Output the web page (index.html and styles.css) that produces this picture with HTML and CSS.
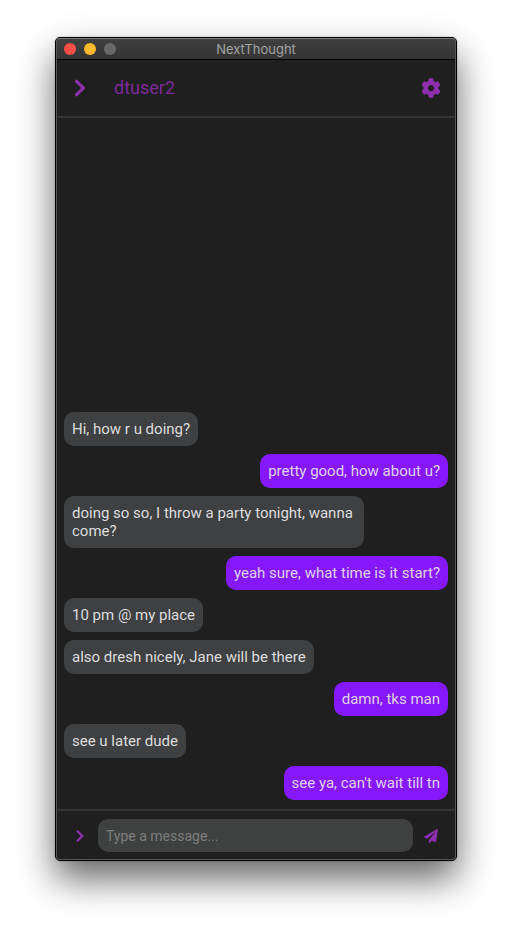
FILE: index.html
```html
<!DOCTYPE html>
<html lang="en">
<head>
<meta charset="utf-8">
<title>NextThought</title>
<link rel="stylesheet" href="styles.css">
</head>
<body>
<div class="window">
  <div class="titlebar">
    <div class="lights">
      <button class="light close" aria-label="Close"></button>
      <button class="light minimize" aria-label="Minimize"></button>
      <button class="light zoom" aria-label="Zoom" disabled></button>
    </div>
    <span class="title">NextThought</span>
  </div>
  <header class="header">
    <button class="icon-button" aria-label="Open conversations"><svg class="icon-large" viewBox="0 0 320 512"><path d="M285.476 272.971L91.132 467.314c-9.373 9.373-24.569 9.373-33.941 0l-22.667-22.667c-9.357-9.357-9.375-24.522-.04-33.901L188.505 256 34.484 101.255c-9.335-9.379-9.317-24.544.04-33.901l22.667-22.667c9.373-9.373 24.569-9.373 33.941 0L285.475 239.03c9.373 9.372 9.373 24.568.001 33.941z"/></svg></button>
    <h1 class="name">dtuser2</h1>
    <button class="icon-button" aria-label="Settings"><svg class="icon-large" viewBox="0 0 512 512"><path d="M487.4 315.7l-42.6-24.6c4.3-23.2 4.3-47 0-70.2l42.6-24.6c4.9-2.8 7.1-8.6 5.5-14-11.1-35.6-30-67.8-54.7-94.6-3.8-4.1-10-5.1-14.8-2.3L380.8 110c-17.9-15.4-38.5-27.3-60.8-35.1V25.8c0-5.6-3.9-10.5-9.4-11.7-36.7-8.2-74.3-7.8-109.2 0-5.5 1.2-9.4 6.1-9.4 11.7V75c-22.2 7.9-42.8 19.8-60.8 35.1L88.7 85.5c-4.9-2.8-11-1.9-14.8 2.3-24.7 26.7-43.6 58.9-54.7 94.6-1.7 5.4.6 11.2 5.5 14L67.3 221c-4.3 23.2-4.3 47 0 70.2l-42.6 24.6c-4.9 2.8-7.1 8.6-5.5 14 11.1 35.6 30 67.8 54.7 94.6 3.8 4.1 10 5.1 14.8 2.3l42.6-24.6c17.9 15.4 38.5 27.3 60.8 35.1v49.2c0 5.6 3.9 10.5 9.4 11.7 36.7 8.2 74.3 7.8 109.2 0 5.5-1.2 9.4-6.1 9.4-11.7v-49.2c22.2-7.9 42.8-19.8 60.8-35.1l42.6 24.6c4.9 2.8 11 1.9 14.8-2.3 24.7-26.7 43.6-58.9 54.7-94.6 1.5-5.5-.7-11.3-5.6-14.1zM256 336c-44.1 0-80-35.9-80-80s35.9-80 80-80 80 35.9 80 80-35.9 80-80 80z"/></svg></button>
  </header>
  <main class="messages">
    <p class="message">Hi, how r u doing?</p>
    <p class="message sent">pretty good, how about u?</p>
    <p class="message">doing so so, I throw a party tonight, wanna come?</p>
    <p class="message sent">yeah sure, what time is it start?</p>
    <p class="message">10 pm @ my place</p>
    <p class="message">also dresh nicely, Jane will be there</p>
    <p class="message sent">damn, tks man</p>
    <p class="message">see u later dude</p>
    <p class="message sent">see ya, can't wait till tn</p>
  </main>
  <form class="composer">
    <button type="button" class="icon-button" aria-label="More options"><svg class="icon-small" viewBox="0 0 320 512"><path d="M285.476 272.971L91.132 467.314c-9.373 9.373-24.569 9.373-33.941 0l-22.667-22.667c-9.357-9.357-9.375-24.522-.04-33.901L188.505 256 34.484 101.255c-9.335-9.379-9.317-24.544.04-33.901l22.667-22.667c9.373-9.373 24.569-9.373 33.941 0L285.475 239.03c9.373 9.372 9.373 24.568.001 33.941z"/></svg></button>
    <input class="field" type="text" placeholder="Type a message..." aria-label="Message">
    <button type="button" class="icon-button" aria-label="Send"><svg class="icon-small" viewBox="0 0 512 512"><path d="M476 3.2L12.5 270.6c-18.1 10.4-15.8 35.6 2.2 43.2L121 358.4l287.3-253.2c5.5-4.9 13.3 2.6 8.6 8.3L176 407v80.5c0 23.6 28.5 32.9 42.5 15.8L282 426l124.6 52.2c14.2 6 30.4-2.9 33-18.2l72-432C515 7.8 493.3-6.8 476 3.2z"/></svg></button>
  </form>
</div>
</body>
</html>
```
FILE: styles.css
```css
* {
  box-sizing: border-box;
}

body {
  display: flex;
  min-height: 100vh;
  margin: 0;
  padding: 37px 55px 73px;
  background: #fff;
  font-family: Roboto, "Liberation Sans", sans-serif;
}

button {
  flex: none;
  padding: 0;
  border: 0;
  background: none;
}

.window {
  position: relative;
  display: flex;
  flex: 1;
  flex-direction: column;
  min-width: 0;
  border: 1px solid #000;
  border-radius: 5px;
  background: #1f1f1f;
  box-shadow: 0 18px 36px rgba(0, 0, 0, 0.6), 0 0 2px rgba(0, 0, 0, 0.3);
}

/* Light rim just inside the black outline */
.window::after {
  position: absolute;
  inset: 0;
  border: 1px solid #555657;
  border-top-color: #77787a;
  border-radius: 4px;
  content: "";
  pointer-events: none;
}

.titlebar {
  display: grid;
  grid-template-columns: 1fr auto 1fr;
  align-items: center;
  height: 22px;
  padding: 0 8px;
  border-bottom: 1px solid #000;
  border-radius: 4px 4px 0 0;
  background: linear-gradient(#404040, #343434);
}

.lights {
  display: flex;
  gap: 8px;
}

.light {
  width: 12px;
  height: 12px;
  border-radius: 50%;
}

.close {
  background: #ff4f48;
}

.minimize {
  background: #ffb92c;
}

.zoom {
  background: #686868;
}

.title {
  color: #a3a3a3;
  font-family: Inter, Roboto, sans-serif;
  font-size: 13px;
  line-height: 20px;
}

.header {
  display: flex;
  align-items: center;
  height: 58px;
  padding: 0 13px 0 12px;
  border-bottom: 2px solid #333435;
}

.icon-button {
  display: flex;
  align-items: center;
  justify-content: center;
  width: 24px;
  height: 24px;
  color: #8e2fae;
}

.icon-button svg {
  fill: currentColor;
}

.icon-large {
  width: 20px;
  height: 20px;
}

.icon-small {
  width: 14px;
  height: 14px;
}

.name {
  flex: 1;
  margin: 0 0 0 22px;
  color: #7f2a9b;
  font-size: 18px;
  font-weight: 400;
  line-height: 24px;
}

.messages {
  display: flex;
  flex: 1;
  flex-direction: column;
  justify-content: flex-end;
  align-items: flex-start;
  gap: 8px;
  padding: 8px 8px 9px;
}

.message {
  max-width: 300px;
  margin: 0;
  padding: 8px;
  border-radius: 10px;
  background: #3f4042;
  color: #dcdcdc;
  font-size: 15px;
  line-height: 18px;
}

.sent {
  align-self: flex-end;
  background: #8618ff;
  color: #dfd0f0;
}

.composer {
  display: flex;
  align-items: center;
  gap: 6px;
  padding: 8px 13px 8px 12px;
  border-top: 2px solid #333435;
}

.field {
  flex: 1;
  min-width: 0;
  height: 33px;
  padding: 0 8px;
  border: 0;
  border-radius: 10px;
  background: #3f4140;
  color: #dcdcdc;
  font-family: inherit;
  font-size: 14px;
}

.field::placeholder {
  color: #7c7d7c;
}
```
